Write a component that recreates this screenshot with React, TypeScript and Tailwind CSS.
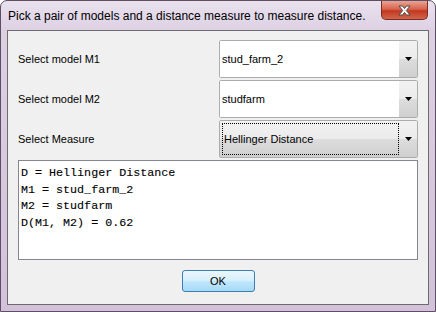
import React from "react";

const ui = { fontFamily: '"Liberation Sans", Arial, sans-serif' };
const mono = { fontFamily: '"Liberation Mono", "Courier New", monospace' };

function Arrow() {
    return (
        <svg width="7" height="4" viewBox="0 0 7 4">
            <path d="M0 0 H7 L3.5 4 Z" fill="#000" />
        </svg>
    );
}

function CloseX() {
    return (
        <svg width="13" height="11" viewBox="0 0 13 11">
            <path
                d="M1 1 H4.5 L6.5 3.6 L8.5 1 H12 L8.3 5.5 L12 10 H8.5 L6.5 7.4 L4.5 10 H1 L4.7 5.5 Z"
                fill="#fff"
                stroke="#4a4a4a"
                strokeWidth="1"
                strokeLinejoin="round"
            />
        </svg>
    );
}

function Combo({ value, focused }: { value: string; focused?: boolean }) {
    return (
        <div className="relative h-[38px] w-[199px] border border-[#acacac] rounded-[2px] flex">
            {focused ? (
                <div className="flex-1 flex bg-[linear-gradient(#f2f2f2_0%,#ebebeb_50%,#dddddd_50%,#cfcfcf_100%)]">
                    <div className="flex-1 m-[2px] mr-0 border border-dotted border-black flex items-center pl-[1px] text-[11px] text-black">
                        {value}
                    </div>
                    <div className="w-[18px] flex items-center justify-center">
                        <Arrow />
                    </div>
                </div>
            ) : (
                <>
                    <div className="flex-1 bg-white flex items-center pl-[2px] text-[11px] text-black">{value}</div>
                    <div className="w-[18px] flex items-center justify-center bg-[linear-gradient(#f2f2f2_0%,#ebebeb_50%,#dddddd_50%,#cfcfcf_100%)]">
                        <Arrow />
                    </div>
                </>
            )}
        </div>
    );
}

export default function App() {
    return (
        <div className="w-[436px] h-[312px] bg-white" style={ui}>
            <div className="w-[436px] h-[312px] rounded-t-[7px] border border-[#5d4e63] bg-[linear-gradient(180deg,#e9e1ee_0%,#ddd0e3_10%,#d3c1da_100%)] flex flex-col px-[6px] pb-[6px]">
                <div className="h-[29px] flex items-start justify-between">
                    <div className="pt-[8px] pl-[1px] text-[12px] leading-[14px] text-black">
                        Pick a pair of models and a distance measure to measure distance.
                    </div>
                    <div className="w-[47px] h-[19px] mr-[1px] rounded-b-[5px] border border-t-0 border-[#7a2b23] bg-[linear-gradient(#e8a493_0%,#d8644e_45%,#c2381f_55%,#d2654c_100%)] flex items-center justify-center">
                        <CloseX />
                    </div>
                </div>
                <div className="flex-1 border border-[#6c6c6c] bg-[#f0f0f0] flex flex-col px-[10px] pt-[9px]">
                    <div className="flex flex-col gap-[2px]">
                        <div className="flex items-center justify-between">
                            <span className="text-[11px] text-black">Select model M1</span>
                            <Combo value="stud_farm_2" />
                        </div>
                        <div className="flex items-center justify-between">
                            <span className="text-[11px] text-black">Select model M2</span>
                            <Combo value="studfarm" />
                        </div>
                        <div className="flex items-center justify-between">
                            <span className="text-[11px] text-black">Select Measure</span>
                            <Combo value="Hellinger Distance" focused />
                        </div>
                    </div>
                    <div className="mt-[2px] h-[100px] border border-[#828790] bg-white px-[2px] pt-[4px] text-[11.7px] leading-[16.7px] text-black [-webkit-text-stroke:0.1px_#000]" style={mono}>
                        <div>D = Hellinger Distance</div>
                        <div>M1 = stud_farm_2</div>
                        <div>M2 = studfarm</div>
                        <div>D(M1, M2) = 0.62</div>
                    </div>
                    <div className="flex justify-center mt-[10px]">
                        <button className="w-[73px] h-[22px] rounded-[3px] border border-[#3c7fb1] bg-[linear-gradient(#eaf6fd_0%,#d9f0fc_45%,#bee6fd_55%,#a7d9f5_100%)] text-[11px] text-black">
                            OK
                        </button>
                    </div>
                </div>
            </div>
        </div>
    );
}
